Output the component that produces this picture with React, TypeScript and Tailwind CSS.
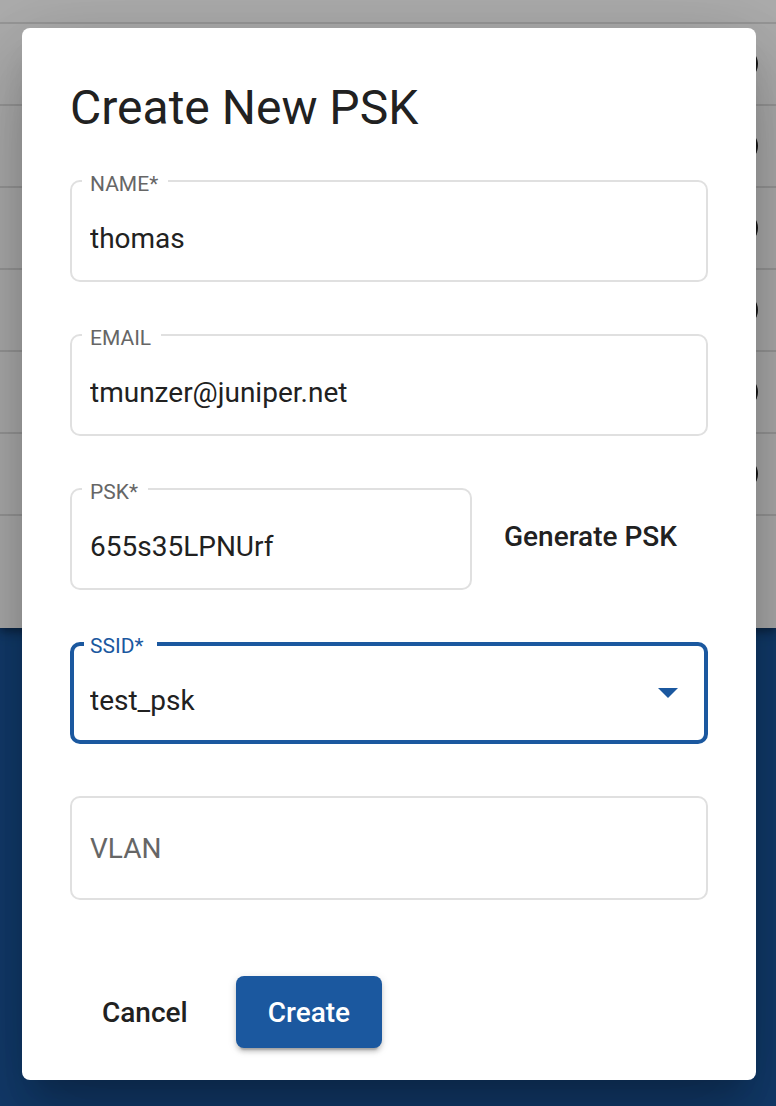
import { useState, type FormEvent } from "react";

const inputClass =
  "block h-[87px] w-full bg-transparent px-2 pt-1 text-[28px] text-[#212121] outline-none";

interface TextFieldProps {
  id: string;
  label: string;
  value: string;
  onChange: (value: string) => void;
  type?: string;
  required?: boolean;
}

function TextField({ id, label, value, onChange, type = "text", required }: TextFieldProps) {
  return (
    <fieldset className="min-w-0 flex-1 rounded-[10px] border-2 border-[#e0e0e0] px-[10px]">
      <legend className="h-6 pl-2 pr-[10px] pt-[3px] text-[21px] leading-6 text-[#666666]">
        <label htmlFor={id}>{label}</label>
      </legend>
      <input
        id={id}
        type={type}
        required={required}
        value={value}
        onChange={(e) => onChange(e.target.value)}
        className={inputClass}
      />
    </fieldset>
  );
}

function TableBackground() {
  const rows = [0, 1, 2, 3, 4, 5];
  return (
    <div
      aria-hidden="true"
      className="col-start-1 row-start-1 flex min-w-0 flex-col bg-[#1b589f]"
    >
      <div className="bg-white pb-28 shadow-[0_4px_8px_rgba(0,0,0,0.3),0_2px_16px_rgba(0,0,0,0.2)]">
        <div className="h-6 border-b-2 border-[#e0e0e0]" />
        {rows.map((row) => (
          <div
            key={row}
            className="flex h-[82px] items-center justify-end border-b-2 border-[#e0e0e0] pr-[18px]"
          >
            <span className="size-[34px] rounded-full bg-[#212121]" />
          </div>
        ))}
      </div>
    </div>
  );
}

export default function App() {
  const [name, setName] = useState("thomas");
  const [email, setEmail] = useState("tmunzer@juniper.net");
  const [psk, setPsk] = useState("655s35LPNUrf");
  const [ssid, setSsid] = useState("test_psk");
  const [vlan, setVlan] = useState("");

  const generatePsk = () => {
    const chars = "ABCDEFGHJKLMNPQRSTUVWXYZabcdefghijkmnopqrstuvwxyz23456789";
    setPsk(
      Array.from({ length: 12 }, () => chars[Math.floor(Math.random() * chars.length)]).join("")
    );
  };

  const submit = (e: FormEvent) => e.preventDefault();

  return (
    <div className="grid min-h-screen grid-cols-1 overflow-hidden font-['Roboto',sans-serif]">
      <TableBackground />
      <div className="z-10 col-start-1 row-start-1 bg-black/32 pb-[26px] pl-[22px] pr-5 pt-7">
        <div
          role="dialog"
          aria-modal="true"
          aria-labelledby="dialog-title"
          className="rounded-lg bg-white px-12 pb-8 pt-12 shadow-[0_22px_30px_-14px_rgba(0,0,0,0.2),0_48px_76px_6px_rgba(0,0,0,0.14),0_18px_92px_16px_rgba(0,0,0,0.12)]"
        >
          <h1 id="dialog-title" className="text-5xl leading-[64px] text-[#212121]">
            Create New PSK
          </h1>
          <form onSubmit={submit} className="mt-[29px]">
            <div className="flex flex-col gap-[41px]">
              <TextField id="name" label="NAME*" value={name} onChange={setName} required />
              <TextField id="email" label="EMAIL" type="email" value={email} onChange={setEmail} />
              <div className="flex items-center">
                <TextField id="psk" label="PSK*" value={psk} onChange={setPsk} required />
                <button
                  type="button"
                  onClick={generatePsk}
                  className="h-[72px] shrink-0 rounded-lg pl-8 pr-[31px] pt-[6px] text-[28px] font-medium text-[#212121]"
                >
                  Generate PSK
                </button>
              </div>
              <fieldset className="min-w-0 rounded-[10px] border-4 border-[#1b589f] px-[10px]">
                <legend className="h-[26px] pl-[6px] pr-[14px] pt-[2px] text-[21px] leading-[26px] text-[#1b589f]">
                  <label htmlFor="ssid">SSID*</label>
                </legend>
                <div className="grid grid-cols-1 items-center">
                  <select
                    id="ssid"
                    required
                    value={ssid}
                    onChange={(e) => setSsid(e.target.value)}
                    className="col-start-1 row-start-1 h-[83px] w-full appearance-none bg-transparent px-[6px] pt-1 text-[28px] text-[#212121] outline-none"
                  >
                    <option value="test_psk">test_psk</option>
                  </select>
                  <svg
                    aria-hidden="true"
                    viewBox="0 0 20 10"
                    className="pointer-events-none col-start-1 row-start-1 mb-[11px] mr-4 h-[10px] w-5 justify-self-end fill-[#1b589f]"
                  >
                    <path d="M0 0h20L10 10z" />
                  </svg>
                </div>
              </fieldset>
            </div>
            <input
              type="text"
              name="vlan"
              aria-label="VLAN"
              placeholder="VLAN"
              value={vlan}
              onChange={(e) => setVlan(e.target.value)}
              className="mt-[52px] block h-[104px] w-full rounded-[10px] border-2 border-[#e0e0e0] px-[18px] text-[28px] text-[#212121] outline-none placeholder:text-[#666666]"
            />
            <div className="mt-[76px] flex gap-4">
              <button
                type="button"
                className="h-[72px] rounded-lg px-8 pt-[2px] text-[28px] font-medium text-[#212121]"
              >
                Cancel
              </button>
              <button
                type="submit"
                className="h-[72px] rounded-lg bg-[#1b589f] px-8 pt-[2px] text-[28px] font-medium text-white shadow-[0_6px_2px_-4px_rgba(0,0,0,0.2),0_4px_4px_rgba(0,0,0,0.14),0_2px_10px_rgba(0,0,0,0.12)]"
              >
                Create
              </button>
            </div>
          </form>
        </div>
      </div>
    </div>
  );
}
